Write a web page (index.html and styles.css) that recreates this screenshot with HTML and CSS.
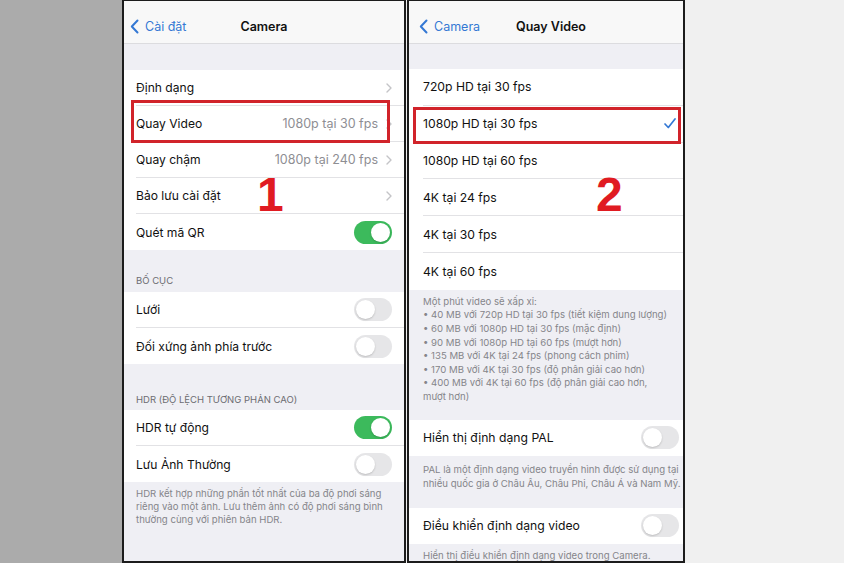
FILE: index.html
```html
<!DOCTYPE html>
<html lang="vi">
  <head>
    <meta charset="UTF-8" />
    <meta name="viewport" content="width=device-width, initial-scale=1.0" />
    <title>Cài đặt Camera - Quay Video</title>
    <link rel="stylesheet" href="styles.css">
  </head>
  <body>
    <div class="page">
      <div class="side side-left"></div>

      <!-- Screen 1: Camera settings -->
      <div class="phone phone-a">
        <div class="navbar">
          <span class="back">
            <svg width="9" height="15" viewBox="0 0 9 15"><polyline points="7.5,1.5 1.8,7.5 7.5,13.5" fill="none" stroke="currentColor" stroke-width="2" stroke-linecap="round" stroke-linejoin="round"/></svg>
            Cài đặt
          </span>
          <span class="title">Camera</span>
          <span></span>
        </div>
        <div class="spacer"></div>

        <ul class="group">
          <li class="row"><div class="row-body"><span class="label">Định dạng</span><span class="chev"><svg width="6" height="10" viewBox="0 0 6 10"><polyline points="1,1 5,5 1,9" fill="none" stroke="currentColor" stroke-width="1.4" stroke-linecap="round" stroke-linejoin="round"/></svg></span></div></li>
          <li class="row"><div class="row-body"><span class="label">Quay Video</span><span class="value">1080p tại 30 fps</span><span class="chev"><svg width="6" height="10" viewBox="0 0 6 10"><polyline points="1,1 5,5 1,9" fill="none" stroke="currentColor" stroke-width="1.4" stroke-linecap="round" stroke-linejoin="round"/></svg></span></div></li>
          <li class="row"><div class="row-body"><span class="label">Quay chậm</span><span class="value">1080p tại 240 fps</span><span class="chev"><svg width="6" height="10" viewBox="0 0 6 10"><polyline points="1,1 5,5 1,9" fill="none" stroke="currentColor" stroke-width="1.4" stroke-linecap="round" stroke-linejoin="round"/></svg></span></div></li>
          <li class="row"><div class="row-body"><span class="label">Bảo lưu cài đặt</span><span class="chev"><svg width="6" height="10" viewBox="0 0 6 10"><polyline points="1,1 5,5 1,9" fill="none" stroke="currentColor" stroke-width="1.4" stroke-linecap="round" stroke-linejoin="round"/></svg></span></div></li>
          <li class="row"><div class="row-body"><span class="label">Quét mã QR</span><span class="switch on"><span class="knob"></span></span></div></li>
        </ul>

        <div class="section-head">Bố cục</div>
        <ul class="group">
          <li class="row"><div class="row-body"><span class="label">Lưới</span><span class="switch"><span class="knob"></span></span></div></li>
          <li class="row"><div class="row-body"><span class="label">Đối xứng ảnh phía trước</span><span class="switch"><span class="knob"></span></span></div></li>
        </ul>

        <div class="section-head section-head-lg">HDR (độ lệch tương phản cao)</div>
        <ul class="group">
          <li class="row"><div class="row-body"><span class="label">HDR tự động</span><span class="switch on"><span class="knob"></span></span></div></li>
          <li class="row"><div class="row-body"><span class="label">Lưu Ảnh Thường</span><span class="switch"><span class="knob"></span></span></div></li>
        </ul>
        <p class="footer">HDR kết hợp những phần tốt nhất của ba độ phơi sáng<br>riêng vào một ảnh. Lưu thêm ảnh có độ phơi sáng bình<br>thường cùng với phiên bản HDR.</p>

        <div class="highlight highlight-a"></div>
        <div class="step step-a">1</div>
      </div>

      <!-- Screen 2: video resolution -->
      <div class="phone phone-b">
        <div class="navbar">
          <span class="back">
            <svg width="9" height="15" viewBox="0 0 9 15"><polyline points="7.5,1.5 1.8,7.5 7.5,13.5" fill="none" stroke="currentColor" stroke-width="2" stroke-linecap="round" stroke-linejoin="round"/></svg>
            Camera
          </span>
          <span class="title">Quay Video</span>
          <span></span>
        </div>
        <div class="spacer"></div>

        <ul class="group">
          <li class="row"><div class="row-body"><span class="label">720p HD tại 30 fps</span></div></li>
          <li class="row"><div class="row-body"><span class="label">1080p HD tại 30 fps</span><span class="check"><svg width="12" height="11" viewBox="0 0 12 11"><polyline points="1,6 4.3,9.5 11,1" fill="none" stroke="currentColor" stroke-width="1.7" stroke-linecap="round" stroke-linejoin="round"/></svg></span></div></li>
          <li class="row"><div class="row-body"><span class="label">1080p HD tại 60 fps</span></div></li>
          <li class="row"><div class="row-body"><span class="label">4K tại 24 fps</span></div></li>
          <li class="row"><div class="row-body"><span class="label">4K tại 30 fps</span></div></li>
          <li class="row"><div class="row-body"><span class="label">4K tại 60 fps</span></div></li>
        </ul>
        <p class="footer footer-list">Một phút video sẽ xấp xỉ:<br>• 40 MB với 720p HD tại 30 fps (tiết kiệm dung lượng)<br>• 60 MB với 1080p HD tại 30 fps (mặc định)<br>• 90 MB với 1080p HD tại 60 fps (mượt hơn)<br>• 135 MB với 4K tại 24 fps (phong cách phim)<br>• 170 MB với 4K tại 30 fps (độ phân giải cao hơn)<br>• 400 MB với 4K tại 60 fps (độ phân giải cao hơn,<br>mượt hơn)</p>

        <ul class="group">
          <li class="row"><div class="row-body"><span class="label">Hiển thị định dạng PAL</span><span class="switch"><span class="knob"></span></span></div></li>
        </ul>
        <p class="footer footer-pal">PAL là một định dạng video truyền hình được sử dụng tại<br>nhiều quốc gia ở Châu Âu, Châu Phi, Châu Á và Nam Mỹ.</p>

        <ul class="group">
          <li class="row"><div class="row-body"><span class="label">Điều khiển định dạng video</span><span class="switch"><span class="knob"></span></span></div></li>
        </ul>
        <p class="footer footer-last">Hiển thị điều khiển định dạng video trong Camera.</p>

        <div class="highlight highlight-b"></div>
        <div class="step step-b">2</div>
      </div>

      <div class="side side-right"></div>
    </div>
  </body>
</html>
```

FILE: styles.css
```css
/* Page frame */
body {
  margin: 0;
  font-family: Inter, "Noto Sans", sans-serif;
  background: #f0f0f0;
}

.page {
  display: flex;
  width: 844px;
  height: 563px;
  overflow: hidden;
}

.side-left {
  width: 122px;
  background: #ababab;
}

.side-right {
  flex: 1;
  background: #f0f0f0;
}

/* Phone screenshots */
.phone {
  position: relative;
  box-sizing: border-box;
  height: 563px;
  border: 2px solid #1c1c1c;
  border-top-width: 1px;
  background: #efeff4;
  overflow: hidden;
}

.phone-a {
  width: 284px;
  margin-right: 1px;
}

.phone-b {
  width: 278px;
}

/* Navigation bar */
.navbar {
  display: grid;
  grid-template-columns: 1fr auto 1fr;
  align-items: center;
  height: 34px;
  padding-top: 8px;
  background: #f8f8f8;
  border-bottom: 1px solid #dcdcdf;
}

.phone-b .navbar {
  padding-left: 10px;
}

.back {
  display: flex;
  align-items: center;
  gap: 6px;
  padding-left: 6px;
  font-size: 12.5px;
  color: #3478d4;
  white-space: nowrap;
}

.phone-b .back {
  margin-left: -6px;
}

.title {
  font-size: 12.5px;
  font-weight: 600;
  color: #111;
}

.spacer {
  height: 26px;
}

.phone-b .spacer {
  height: 25px;
}

/* Grouped list */
.group {
  list-style: none;
  margin: 0;
  padding: 0;
  background: #fff;
}

.row {
  height: 36px;
  padding-left: 12px;
}

.phone-b .row {
  height: 36.8px;
  padding-left: 14px;
}

.row-body {
  display: flex;
  align-items: center;
  height: 100%;
  box-sizing: border-box;
  padding-right: 12px;
  border-bottom: 1px solid #e2e2e5;
}

.phone-b .row-body {
  padding-right: 4px;
}

.row:last-child .row-body {
  border-bottom: none;
}

.label {
  flex: 1;
  font-size: 12.1px;
  color: #111;
  white-space: nowrap;
}

.phone-b .label {
  font-size: 12.2px;
}

.value {
  font-size: 12.5px;
  color: #8e8e93;
  margin-right: 8px;
}

.chev {
  display: flex;
  color: #c4c4c7;
}

.check {
  display: flex;
  color: #3478d4;
  margin-right: 3px;
}

/* Toggle switch */
.switch {
  display: flex;
  box-sizing: border-box;
  width: 38px;
  height: 23px;
  padding: 2px;
  border-radius: 12px;
  background: #e6e6e8;
}

.switch.on {
  justify-content: flex-end;
  background: #3cba5c;
}

.knob {
  width: 19px;
  height: 19px;
  border-radius: 50%;
  background: #fff;
  box-shadow: 0 1px 2px rgba(0, 0, 0, 0.18);
}

/* Section headers and footers */
.section-head {
  padding: 25px 12px 5px;
  font-size: 9.5px;
  line-height: 12px;
  color: #6d6d72;
  text-transform: uppercase;
}

.section-head-lg {
  padding-top: 30px;
  padding-bottom: 4px;
}

.footer {
  margin: 0;
  padding: 5px 12px 0;
  font-size: 9.6px;
  line-height: 13px;
  color: #85858a;
  white-space: nowrap;
}

.footer-list {
  padding: 5px 14px 16px;
  line-height: 13.6px;
}

.footer-pal {
  padding: 7px 14px 17px;
  line-height: 13.6px;
}

.footer-last {
  padding: 5px 14px 0;
  line-height: 13.6px;
}

/* Red markers drawn over the screens */
.highlight {
  position: absolute;
  box-sizing: border-box;
  border: 3px solid #d1232a;
}

.highlight-a {
  left: 7px;
  top: 99px;
  width: 259px;
  height: 43px;
}

.highlight-b {
  left: 4px;
  top: 106px;
  width: 268px;
  height: 37px;
}

.step {
  position: absolute;
  top: 170px;
  font-family: "Liberation Sans", Arial, sans-serif;
  font-size: 48px;
  font-weight: bold;
  line-height: 1;
  color: #e01b22;
}

.step-a {
  left: 133px;
}

.step-b {
  left: 187px;
}
```
